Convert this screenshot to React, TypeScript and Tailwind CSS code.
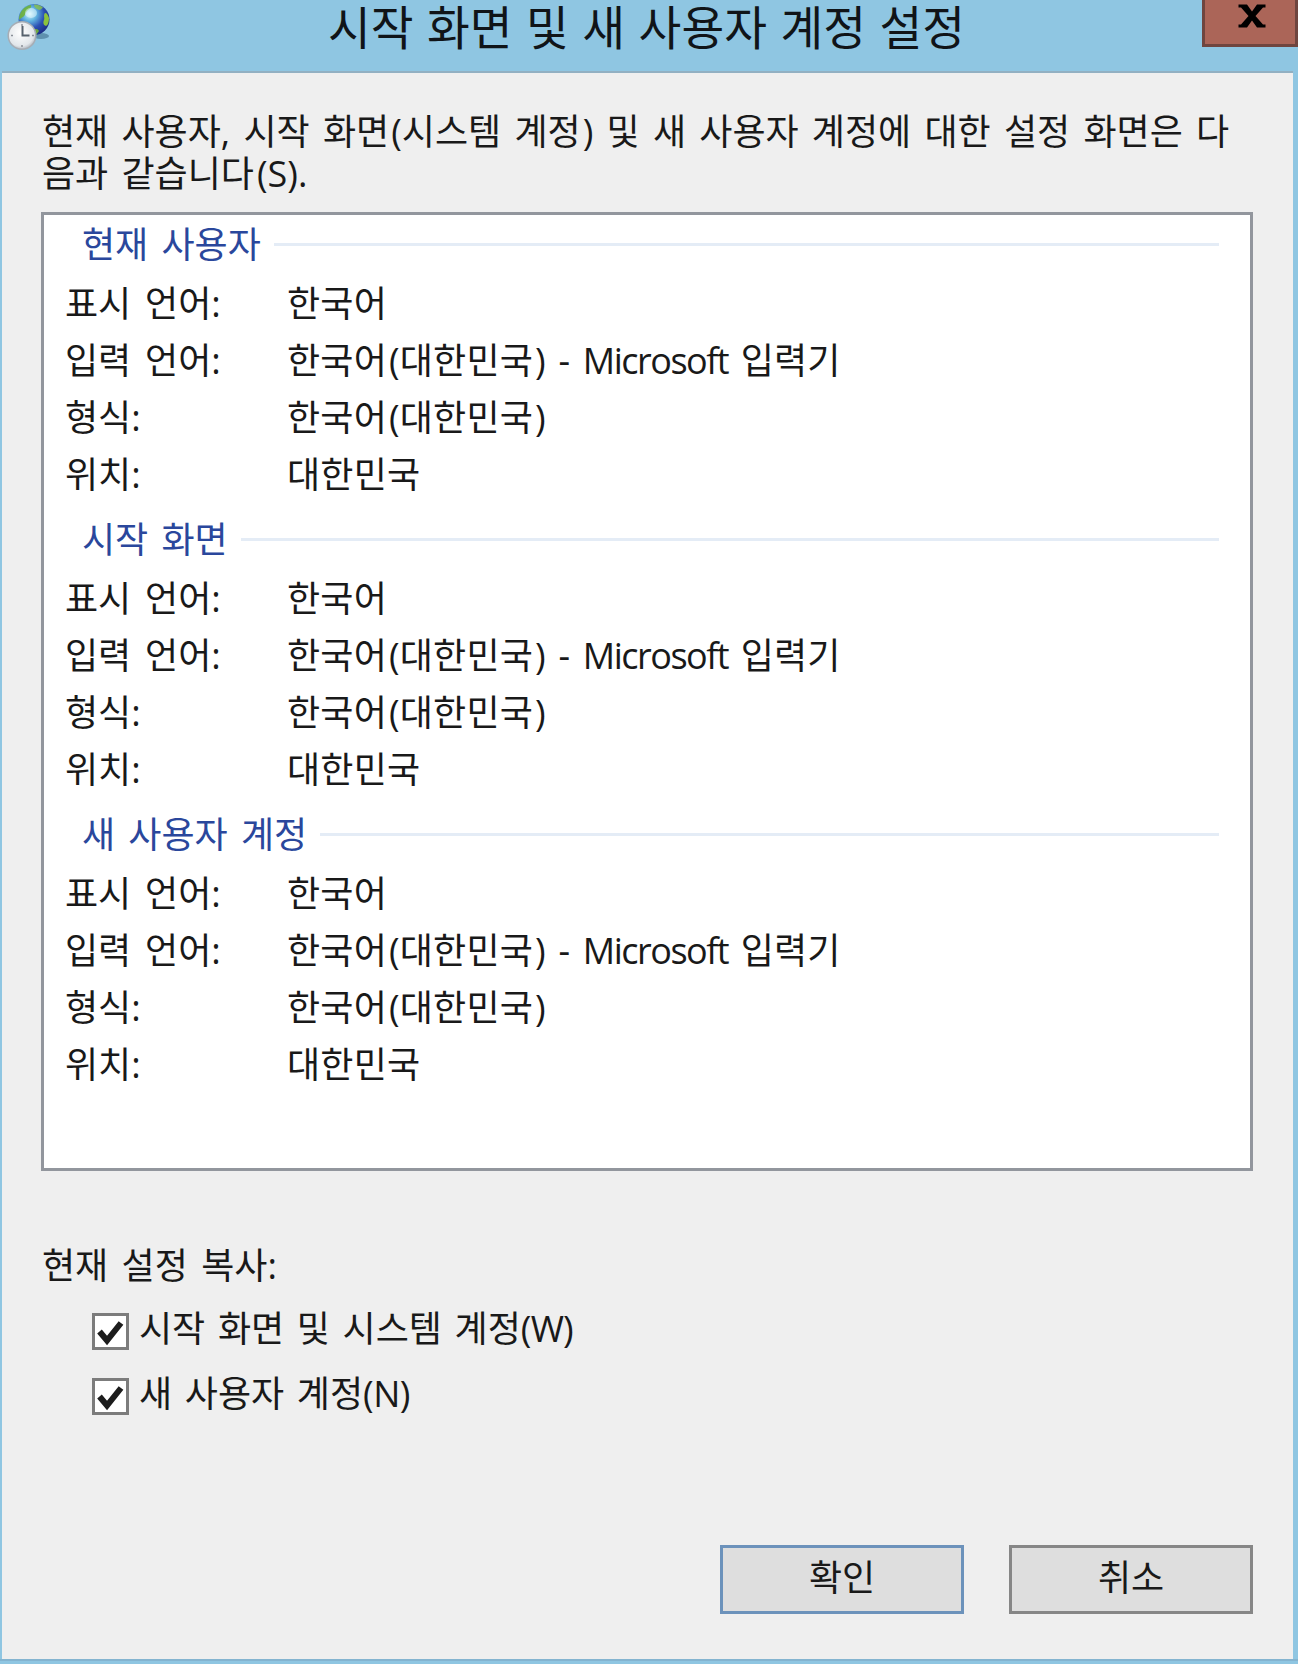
import React from "react";

type Row = { label: string; value: React.ReactNode };

const rows: Row[] = [
  { label: "표시 언어:", value: "한국어" },
  {
    label: "입력 언어:",
    value: (
      <>
        한국어<span className="ml-[2px]">(</span>대한민국<span className="ml-[2px]">)</span> -{" "}
        <span className="tracking-[-1.5px]">Microsoft</span> 입력기
      </>
    ),
  },
  {
    label: "형식:",
    value: (
      <>
        한국어<span className="ml-[2px]">(</span>대한민국<span className="ml-[2px]">)</span>
      </>
    ),
  },
  { label: "위치:", value: "대한민국" },
];

const sections = ["현재 사용자", "시작 화면", "새 사용자 계정"];

function RegionIcon() {
  return (
    <svg className="mt-[3px] ml-[7px] h-[48px] w-[46px]" viewBox="0 0 46 48">
      <defs>
        <radialGradient id="globe" cx="0.36" cy="0.32" r="0.75">
          <stop offset="0" stopColor="#d8f6fb" />
          <stop offset="0.3" stopColor="#62b4e0" />
          <stop offset="0.62" stopColor="#2c50b4" />
          <stop offset="1" stopColor="#1b2a80" />
        </radialGradient>
        <radialGradient id="dial" cx="0.45" cy="0.4" r="0.6">
          <stop offset="0" stopColor="#ffffff" />
          <stop offset="0.8" stopColor="#e2e6ea" />
          <stop offset="1" stopColor="#b4bac2" />
        </radialGradient>
      </defs>
      <ellipse cx="34" cy="33" rx="8" ry="3" fill="#4f7f9c" opacity="0.75" />
      <circle cx="27" cy="16.500" r="15.500" fill="url(#globe)" />
      <path d="M12 17c0-8 5-14 12-15 1 3-2 4-4 6s-2 5-4 6-3 2-4 3z" fill="#6fb13a" opacity="0.9" />
      <path d="M27 1.500c4 0 7 1 9 3-2 2-3 3-5 2s-4-2-4-5z" fill="#8bc64c" opacity="0.8" />
      <path d="M38 10c2 0 3 2 4 5 0 4-1 7-3 8-3-1-3-4-2-6s-1-5 1-7z" fill="#8cc23d" />
      <path d="M26 28c2-3 5-2 6 0l-3 4c-2 0-3-2-3-4z" fill="#6da93b" />
      <ellipse cx="24" cy="10" rx="6" ry="5" fill="#e9fcff" opacity="0.5" />
      <circle cx="15" cy="32.500" r="13.800" fill="url(#dial)" stroke="#a6adb5" strokeWidth="1.500" />
      <path d="M15 21v2M15 42v2M4 32.500h2M25 32.500h2" stroke="#8a9098" strokeWidth="1.500" />
      <path d="M15.500 23v9.500h7" stroke="#56616d" strokeWidth="2" fill="none" />
    </svg>
  );
}

function Check({ children }: { children: React.ReactNode }) {
  return (
    <label className="flex h-[65px] items-start">
      <span className="flex h-[37px] w-[37px] shrink-0 items-center justify-center border-[3px] border-[#7c7c7c] bg-white">
        <svg className="h-[31px] w-[31px]" viewBox="0 0 31 31">
          <path d="M4.500 15.500l7.500 9L26 7" fill="none" stroke="#1c1c1c" strokeWidth="6" />
        </svg>
      </span>
      <span className="ml-[10px] mt-[-3px] leading-[37px] whitespace-nowrap [word-spacing:3.300px]">{children}</span>
    </label>
  );
}

export default function App() {
  return (
    <div className="flex h-[1664px] w-[1298px] flex-col overflow-hidden bg-[#8fc6e2] font-['Open_Sans','Noto_Sans_CJK_KR',sans-serif] text-[36px] text-[#191919] [word-spacing:4.5px]">
      <header className="flex h-[71px] shrink-0 items-start">
        <RegionIcon />
        <h1 className="ml-[275px] whitespace-nowrap text-[46.500px] leading-[54px] text-[#101418] [word-spacing:1.400px]">
          시작 화면 및 새 사용자 계정 설정
        </h1>
        <button className="ml-auto flex h-[47px] w-[96px] justify-center border-x-[3px] border-b-[3px] border-[#6f453f] bg-[#ab6558]">
          <svg className="mt-[4px] ml-[3px] h-[24px] w-[28px]" viewBox="0 0 28 24">
            <path d="M0.500 0.500h8.500L14 7.500l5-7h8.500v3h-2.500L17.500 12l7.500 8.500h2.500v3H19L14 16.500l-5 7H0.500v-3H3L10.500 12 3 3.500H0.500z" fill="#000" />
          </svg>
        </button>
      </header>
      <main className="mr-[5px] ml-[2px] flex h-[1588px] shrink-0 flex-col border-t-2 border-[#92b0c2] bg-[#efefef] pr-[40px] pl-[39px]">
        <p className="mt-[38px] h-[101px] whitespace-nowrap pl-px leading-[42px] [word-spacing:3.900px]">
          현재 사용자, 시작 화면<span className="ml-[2px]">(</span>시스템 계정<span className="ml-[2px]">)</span> 및 새 사용자 계정에 대한 설정 화면은 다
          <br />
          음과 같습니다<span className="ml-[3px]">(</span>S).
        </p>
        <div className="h-[959px] border-[3px] border-[#92969d] bg-white">
          {sections.map((title) => (
            <section key={title} className="mb-[7px] h-[288px]">
              <h2 className="flex h-[60px] items-center pr-[31px] pl-[38px] text-[#2a479c] [word-spacing:3.900px]">
                <span className="whitespace-nowrap">{title}</span>
                <span className="mt-[-2px] ml-[13px] h-[3px] flex-1 bg-[#e4ecf6]" />
              </h2>
              {rows.map((row) => (
                <div key={row.label} className="flex h-[57px] items-center whitespace-nowrap">
                  <span className="w-[221px] shrink-0 pl-[21px]">{row.label}</span>
                  <span className="pl-[22px] tracking-[0.200px] [word-spacing:3px]">{row.value}</span>
                </div>
              ))}
            </section>
          ))}
        </div>
        <p className="mt-[73px] h-[69px] pl-px leading-[44px] [word-spacing:4px]">현재 설정 복사:</p>
        <div className="h-[232px] pl-[51px]">
          <Check>
            시작 화면 및 시스템 계정<span className="tracking-[-0.800px]">(W)</span>
          </Check>
          <Check>
            새 사용자 계정<span className="tracking-[-0.500px]">(N)</span>
          </Check>
        </div>
        <div className="flex justify-end gap-[45px]">
          <button className="h-[69px] w-[244px] border-[3px] border-[#6c92bb] bg-[#dedede] pb-[3px] leading-[50px]">확인</button>
          <button className="h-[69px] w-[244px] border-[3px] border-[#868686] bg-[#dedede] pb-[3px] leading-[50px]">취소</button>
        </div>
      </main>
      <div className="h-[2px] shrink-0 bg-[#84b4d0]" />
    </div>
  );
}
